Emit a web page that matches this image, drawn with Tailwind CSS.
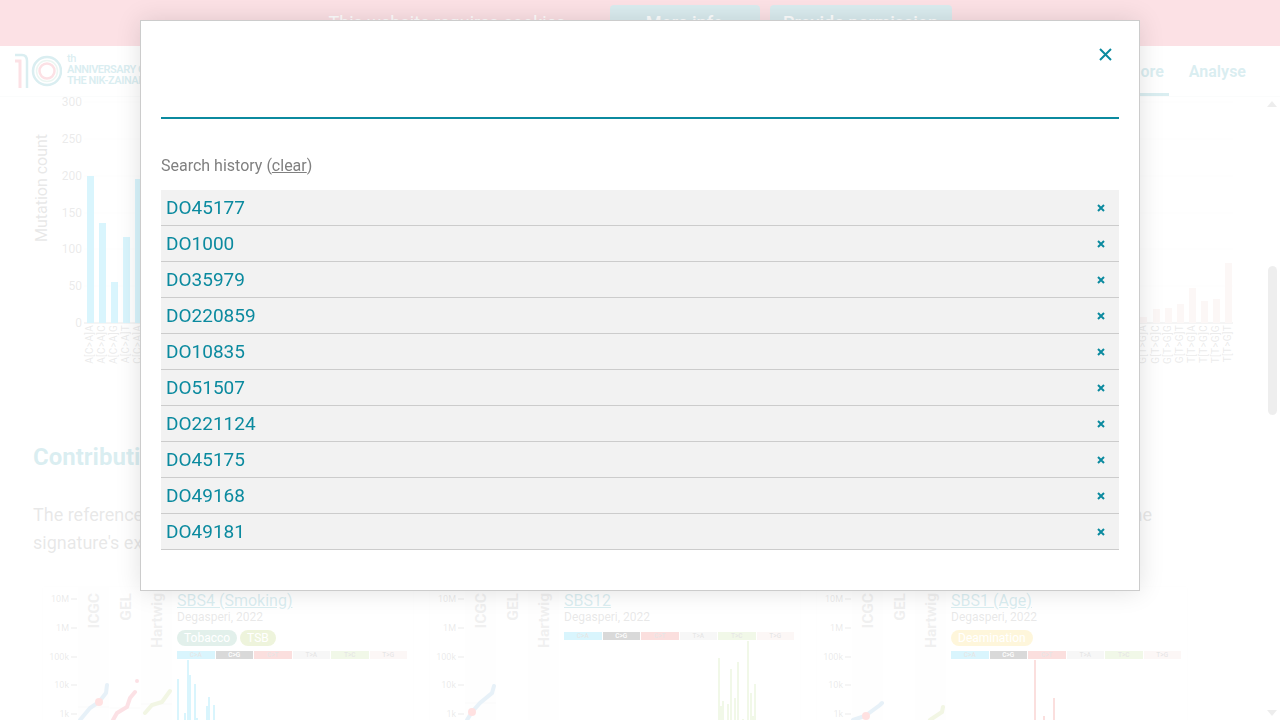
<!DOCTYPE html>
<html lang="en">

<head>
    <meta charset="UTF-8">
    <meta name="viewport" content="width=device-width, initial-scale=1.0">
    <title>Signature explorer</title>
    <script src="https://cdn.jsdelivr.net/npm/@tailwindcss/browser@4"></script>
</head>

<body class="font-[Roboto,sans-serif] h-[720px] overflow-hidden bg-white">

    <!-- Cookie banner -->
    <div class="h-[46px] bg-[#eb3752] flex justify-center gap-[10px] pt-[5px] text-white">
        <div class="w-[271px] text-lg pt-[4px]">This website requires cookies</div>
        <button class="w-[150px] h-[36px] rounded bg-[#0b7d93] text-lg font-medium">More info</button>
        <button class="w-[182px] h-[36px] rounded bg-[#0b7d93] text-lg font-medium">Provide permission</button>
    </div>

    <!-- Navbar -->
    <nav class="h-[51px] border-b border-gray-200 flex items-center justify-between pl-[15px] pr-[34px]">
        <div class="flex items-center gap-[5px] text-[#0b8a9f]">
            <svg width="47" height="36" viewBox="0 0 47 36" fill="none">
                <path d="M0 8 H5 V35" stroke="#eb3752" stroke-width="3" />
                <path d="M0 2 H7 Q12 2 12 8 V35" stroke="#0b8a9f" stroke-width="2.5" />
                <circle cx="32" cy="18" r="14" stroke="#0b8a9f" stroke-width="2.5" />
                <circle cx="32" cy="18" r="10.5" stroke="#7fc4a8" stroke-width="1.5" />
                <circle cx="32" cy="18" r="7.5" stroke="#eb3752" stroke-width="2.5" />
            </svg>
            <div class="text-[11px] leading-[11px] font-bold tracking-[-0.5px] w-[120px] -mt-[4px]">
                <div class="font-medium">th</div>
                <div>ANNIVERSARY OF</div>
                <div>THE NIK-ZAINAL</div>
            </div>
        </div>
        <div class="flex text-[#0b8a9f] font-bold text-base self-start">
            <a href="#" class="h-[50px] pt-[14px] px-[5px] mr-[20px] border-b-[3px] border-[#0b8a9f]">Explore</a>
            <a href="#" class="h-[50px] pt-[14px]">Analyse</a>
        </div>
    </nav>

    <!-- Scrolling page content -->
    <div class="h-[623px] flex overflow-hidden">
        <div class="w-[1264px] shrink-0">
            <svg id="chart" width="1264" height="330" viewBox="0 97 1264 330" class="block"></svg>
            <h2 class="mt-[15px] pl-[33px] h-[30px] text-2xl leading-[30px] font-bold text-[#0b8a9f]">Contribution of this signature</h2>
            <div class="mt-[29px] pl-[33px] pr-[112px] text-lg leading-[28px] text-[#666]">
                <div class="flex justify-between">
                    <span>The reference signature</span>
                    <span>the</span>
                </div>
                <div>signature's exposure</div>
            </div>
            <div id="cards" class="mt-[30px] ml-[43px] flex gap-[17px]"></div>
        </div>
        <!-- Scrollbar -->
        <div class="w-4 flex flex-col items-center justify-between py-[4px] relative">
            <svg width="10" height="6" viewBox="0 0 10 6"><path d="M0 6 L5 0 L10 6 Z" fill="#888" /></svg>
            <div class="w-[9px] h-[149px] rounded-full bg-[#909090] absolute top-[169px] left-[4px]"></div>
            <svg width="10" height="6" viewBox="0 0 10 6"><path d="M0 0 L5 6 L10 0 Z" fill="#888" /></svg>
        </div>
    </div>

    <!-- Page dimming -->
    <div class="fixed inset-0 bg-white/85"></div>

    <!-- Search modal -->
    <div class="fixed left-[140px] top-[20px] w-[1000px] h-[571px] bg-white border border-[#ccc] shadow-[0_0_24px_rgba(0,0,0,0.12)] px-5">
        <div class="h-[58px] pt-[27px] flex justify-end pr-[7px]">
            <svg width="13" height="13" viewBox="0 0 13 13" stroke="#0b8a9f" stroke-width="2" fill="none">
                <path d="M1 1 L12 12 M12 1 L1 12" />
            </svg>
        </div>
        <input type="text" class="block w-full h-[40px] border-b-2 border-[#0b8a9f] outline-none">
        <div class="mt-[35px] mb-[12px] text-base leading-6 text-[#808080]">Search history (<a href="#" class="underline">clear</a>)</div>
        <ul id="history"></ul>
    </div>

    <script>
        const mutationColors = ['#03bcee', '#010101', '#e32926', '#cac9c9', '#a1ce63', '#ebc6c4'];
        const mutationNames = ['C>A', 'C>G', 'C>T', 'T>A', 'T>C', 'T>G'];

        // Search history rows
        const history = ['DO45177', 'DO1000', 'DO35979', 'DO220859', 'DO10835', 'DO51507', 'DO221124', 'DO45175', 'DO49168', 'DO49181'];
        document.getElementById('history').innerHTML = history.map(id => `
            <li class="h-[36px] bg-[#f2f2f2] border-b border-[#ccc] flex items-center justify-between pl-[5px] pr-[14px] text-[19px] text-[#0b8a9f]">
                <span class="pt-[2px]">${id}</span>
                <svg width="8" height="8" viewBox="0 0 8 8" stroke="#0b8a9f" stroke-width="2" fill="none"><path d="M1 1 L7 7 M7 1 L1 7" /></svg>
            </li>`).join('');

        // Mutation count chart, in page coordinates
        const leftBars = [['A[C>A]A', 87, 176], ['A[C>A]C', 99, 223], ['A[C>A]G', 111, 282], ['A[C>A]T', 123, 237], ['C[C>A]A', 135, 179]];
        const rightBars = [['G[T>G]A', 1140, 317], ['G[T>G]C', 1153, 309], ['G[T>G]G', 1165, 308], ['G[T>G]T', 1177, 304], ['T[T>G]A', 1189, 288], ['T[T>G]C', 1201, 301], ['T[T>G]G', 1213, 299], ['T[T>G]T', 1225, 263]];
        let chart = '';
        [[300, 102], [250, 139], [200, 176], [150, 213], [100, 249], [50, 286], [0, 323]].forEach(([label, y]) => {
            chart += `<text x="82" y="${y + 4}" text-anchor="end" font-size="12" fill="#777">${label}</text>`;
            if (label > 0) chart += `<line x1="84" x2="1233" y1="${y}" y2="${y}" stroke="#eee" />`;
        });
        chart += `<text transform="translate(47 188) rotate(-90)" text-anchor="middle" font-size="16" fill="#666">Mutation count</text>`;
        chart += `<line x1="84" x2="1233" y1="323" y2="323" stroke="#777" />`;
        leftBars.concat(rightBars).forEach(([label, x, top], i) => {
            const color = i < 5 ? mutationColors[0] : mutationColors[5];
            chart += `<rect x="${x}" y="${top}" width="7" height="${323 - top}" fill="${color}" />`;
            chart += `<text transform="translate(${x + 6} 325) rotate(-90)" text-anchor="end" font-size="10" letter-spacing="0.3" fill="#777">${label}</text>`;
        });
        document.getElementById('chart').innerHTML = chart;

        // Signature cards, bars and curves given in page coordinates
        const cards = [
            {
                left: 43, title: 'SBS4 (Smoking)', tags: [['Tobacco', 'bg-[#3c9b78]'], ['TSB', 'bg-[#8cb414]']], stripBottom: 659, barColor: 0,
                bars: [[177, 679], [184, 713], [187, 660], [189, 675], [194, 684], [196, 718], [206, 706], [208, 697], [213, 705]],
                medians: [707, 708, 704], dot: [99, 702],
                curves: [['80,720 90,708 99,702 106,693 107,685', '#5f9fd0'], ['113,720 117,713 127,707 130,698 135,692', '#eb3752'], ['145,713 152,705 162,702 170,691', '#a5c04a']],
                extra: [137, 681, '#eb3752']
            },
            {
                left: 430, title: 'SBS12', tags: [], stripBottom: 640, barColor: 4,
                bars: [[718, 658], [720, 706], [722, 701], [727, 704], [730, 669], [734, 698], [737, 662], [742, 719], [747, 641], [750, 693], [752, 716], [754, 684]],
                medians: [703], dot: [472, 712],
                curves: [['467,720 472,712 480,703 492,693 494,686', '#5f9fd0']]
            },
            {
                left: 817, title: 'SBS1 (Age)', tags: [['Deamination', 'bg-[#f5c30f]']], stripBottom: 659, barColor: 2,
                bars: [[1034, 660], [1043, 716], [1053, 698]],
                medians: [], dot: [866, 716],
                curves: [['853,720 865,716 880,705 882,703', '#5f9fd0'], ['930,720 942,712 943,707', '#a5c04a']]
            }
        ];

        document.getElementById('cards').innerHTML = cards.map(card => {
            const left = card.left;
            const labels = [['10M', 599], ['1M', 628], ['100k', 657], ['10k', 685], ['1k', 714]].map(([t, y]) => `
                <text x="${left + 26}" y="${y + 3}" text-anchor="end" font-size="9" fill="#777">${t}</text>
                <line x1="${left + 28}" x2="${left + 34}" y1="${y}" y2="${y}" stroke="#777" />`).join('');
            const columns = ['ICGC', 'GEL', 'Hartwig'].map((name, i) => {
                const x = left + 35 + i * 31.5;
                return `<rect x="${x}" y="587" width="31" height="133" fill="#${i === 1 ? 'fdfdfd' : 'f4f4f4'}" />
                    <text transform="translate(${x + 21} 593) rotate(-90)" text-anchor="end" font-size="15.5" font-weight="700" fill="#999">${name}</text>`;
            }).join('');
            const medians = card.medians.map((y, i) => `<line x1="${left + 35 + i * 31.5}" x2="${left + 66 + i * 31.5}" y1="${y}" y2="${y}" stroke="#ddd" />`).join('');
            const curves = card.curves.map(([points, color]) => `<polyline points="${points}" fill="none" stroke="${color}" stroke-width="4" stroke-linecap="round" />`).join('');
            const extra = card.extra ? `<circle cx="${card.extra[0]}" cy="${card.extra[1]}" r="2" fill="${card.extra[2]}" />` : '';
            const panelLeft = left + 134;
            const bars = card.bars.map(([x, top]) => `<rect x="${x}" y="${top}" width="2" height="${720 - top}" fill="${mutationColors[card.barColor]}" />`).join('');
            const tags = card.tags.length ? `<div class="flex gap-[3px] mt-[6px] mb-[5px]">${card.tags.map(([t, color]) => `<span class="${color} h-4 px-[7px] rounded-full text-xs leading-4 text-white">${t}</span>`).join('')}</div>` : '<div class="h-2"></div>';
            const strip = mutationNames.map((name, i) => `<div class="flex-1 h-2 text-[6.5px] leading-2 text-center font-medium ${i === 1 ? 'text-white' : 'text-[#555]'}" style="background:${mutationColors[i]}">${name}</div>`).join('');
            return `
                <div class="w-[370px] h-[140px] shrink-0 flex gap-[5px] shadow-[0_0_2px_rgba(0,0,0,0.08)] overflow-hidden">
                    <svg width="129" height="133" viewBox="${left} 587 129 133" class="block shrink-0">${columns}${labels}${medians}${curves}${extra}
                        <circle cx="${card.dot[0]}" cy="${card.dot[1]}" r="4" fill="#ff3b3b" />
                    </svg>
                    <div class="w-[230px] shrink-0">
                        <a href="#" class="block text-base leading-[20px] pt-[4px] text-[#0b8a9f] underline">${card.title}</a>
                        <div class="-mt-px text-xs leading-[14px] text-[#666]">Degasperi, 2022</div>
                        ${tags}
                        <div class="flex gap-px">${strip}</div>
                        <svg width="230" height="${720 - card.stripBottom}" viewBox="${panelLeft} ${card.stripBottom} 230 ${720 - card.stripBottom}" class="block">${bars}</svg>
                    </div>
                </div>`;
        }).join('');
    </script>

</body>

</html>
